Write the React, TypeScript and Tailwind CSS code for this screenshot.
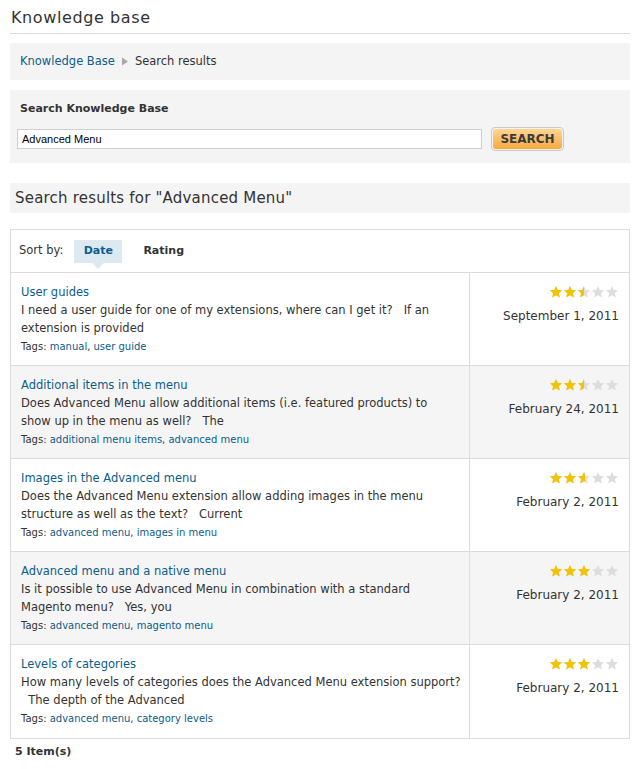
import React from 'react'

const results = [
  {
    title: 'User guides',
    text: 'I need a user guide for one of my extensions, where can I get it? \u00a0\u00a0If an extension is provided',
    tags: ['manual', 'user guide'],
    rating: 2.5,
    date: 'September 1, 2011',
  },
  {
    title: 'Additional items in the menu',
    text: 'Does Advanced Menu allow additional items (i.e. featured products) to show\u00a0up in the menu as well? \u00a0\u00a0The',
    tags: ['additional menu items', 'advanced menu'],
    rating: 2.5,
    date: 'February 24, 2011',
  },
  {
    title: 'Images in the Advanced menu',
    text: 'Does the Advanced Menu extension allow adding images in the menu structure as well as the text? \u00a0\u00a0Current',
    tags: ['advanced menu', 'images in menu'],
    rating: 2.6,
    date: 'February 2, 2011',
  },
  {
    title: 'Advanced menu and a native menu',
    text: 'Is it possible to use Advanced Menu in combination with a standard Magento menu? \u00a0\u00a0Yes, you',
    tags: ['advanced menu', 'magento menu'],
    rating: 3,
    date: 'February 2, 2011',
  },
  {
    title: 'Levels of categories',
    text: 'How many levels of categories does the Advanced Menu extension support? \u00a0\u00a0The depth of the Advanced',
    tags: ['advanced menu', 'category levels'],
    rating: 3,
    date: 'February 2, 2011',
  },
]

function StarRow({ color }: { color: string }) {
  return (
    <div className="flex">
      {[0, 1, 2, 3, 4].map((i) => (
        <svg key={i} width="14" height="14" viewBox="0 0 24 24" className="shrink-0">
          <path
            d="M12 1.5l3.1 6.9 7.4.7-5.6 5 1.7 7.4L12 17.6l-6.6 3.9 1.7-7.4-5.6-5 7.4-.7z"
            fill={color}
          />
        </svg>
      ))}
    </div>
  )
}

function Stars({ rating }: { rating: number }) {
  return (
    <div className="relative w-[70px] h-[14px]">
      <StarRow color="#dddddd" />
      <div className="absolute left-0 top-0 overflow-hidden h-[14px]" style={{ width: `${rating * 14}px` }}>
        <StarRow color="#f3c300" />
      </div>
    </div>
  )
}

export default function App() {
  return (
    <main className="px-[10px] text-[#333] text-[11.5px]" style={{ fontFamily: '"DejaVu Sans", Verdana, sans-serif' }}>
      {/* * HEADER */}
      <h1 className="h-[34px] border-b border-[#dcdcdc] pt-[7px] pl-[1px] text-[16px] leading-[22px] tracking-[0.6px] text-[#333]">
        Knowledge base
      </h1>

      <div className="mt-[9px] flex h-[37px] items-center bg-[#f4f4f4] px-[10px]">
        <a href="#" className="text-[#0b5d8c]">Knowledge Base</a>
        <svg width="8" height="9" viewBox="0 0 8 9" className="mx-[6px]">
          <path d="M1 0.5l6 4-6 4z" fill="#a8a8a8" />
        </svg>
        <span>Search results</span>
      </div>

      {/* * SEARCH */}
      <div className="mt-[10px] h-[73px] bg-[#f4f4f4] pt-[11px]">
        <h2 className="pl-[10px] text-[11px] font-bold leading-[16px] text-[#333]">Search Knowledge Base</h2>
        <div className="mt-[10px] flex items-center pl-[7px]">
          <input
            defaultValue="Advanced Menu"
            className="h-[20px] w-[465px] border border-[#cfcfcf] bg-white px-[4px] text-[11px] text-black outline-none"
            style={{ fontFamily: '"Liberation Sans", Arial, sans-serif' }}
          />
          <button className="ml-[9px] h-[24px] w-[73px] rounded-[4px] border border-[#c9c9c9] p-[1px]">
            <span className="flex h-full w-full items-center justify-center rounded-[3px] bg-gradient-to-b from-[#ffd591] to-[#f9a73a] text-[12px] font-bold text-[#3b3b3b]">
              SEARCH
            </span>
          </button>
        </div>
      </div>

      <div className="mt-[20px] flex h-[30px] items-center bg-[#f4f4f4] px-[5px] text-[15px] tracking-[0.2px] text-[#333]">
        Search results for "Advanced Menu"
      </div>

      {/* * RESULTS */}
      <div className="mt-[16px] border border-[#dcdcdc]">
        <div className="flex h-[43px] items-center border-b border-[#dcdcdc] pl-[8px]">
          <span className="mr-[11px]">Sort by:</span>
          <span className="relative flex h-[23px] w-[48px] items-center justify-center bg-[#dde9f0] text-[11px] font-bold text-[#0b5d8c]">
            Date
            <span className="absolute left-1/2 top-full -ml-[6px] h-0 w-0 border-x-[6px] border-t-[6px] border-x-transparent border-t-[#dde9f0]" />
          </span>
          <span className="ml-[21px] text-[11px] font-bold text-[#333]">Rating</span>
        </div>

        {results.map((r, index) => (
          <div
            key={r.title}
            className={`flex h-[93px] ${index < results.length - 1 ? 'border-b border-[#dcdcdc]' : ''} ${index % 2 === 1 ? 'bg-[#f5f5f5]' : 'bg-white'}`}
          >
            <div className="w-[459px] border-r border-[#dcdcdc] pl-[10px] pr-[7px] pt-[10px]">
              <a href="#" className="block leading-[18px] text-[#0b5d8c]">{r.title}</a>
              <p className="leading-[18px]">{r.text}</p>
              <p className="mt-[1px] text-[10px] leading-[18px]">
                Tags:{' '}
                {r.tags.map((t, i) => (
                  <span key={t}>
                    <a href="#" className="text-[#0b5d8c]">{t}</a>
                    {i < r.tags.length - 1 ? ', ' : ''}
                  </span>
                ))}
              </p>
            </div>
            <div className="flex flex-1 flex-col items-end pr-[10px] pt-[12px]">
              <Stars rating={r.rating} />
              <span className="mt-[8px] text-[12px] leading-[18px]">{r.date}</span>
            </div>
          </div>
        ))}
      </div>

      <div className="pl-[5px] pt-[5px] text-[11px] font-bold leading-[16px]">5 Item(s)</div>
    </main>
  )
}
